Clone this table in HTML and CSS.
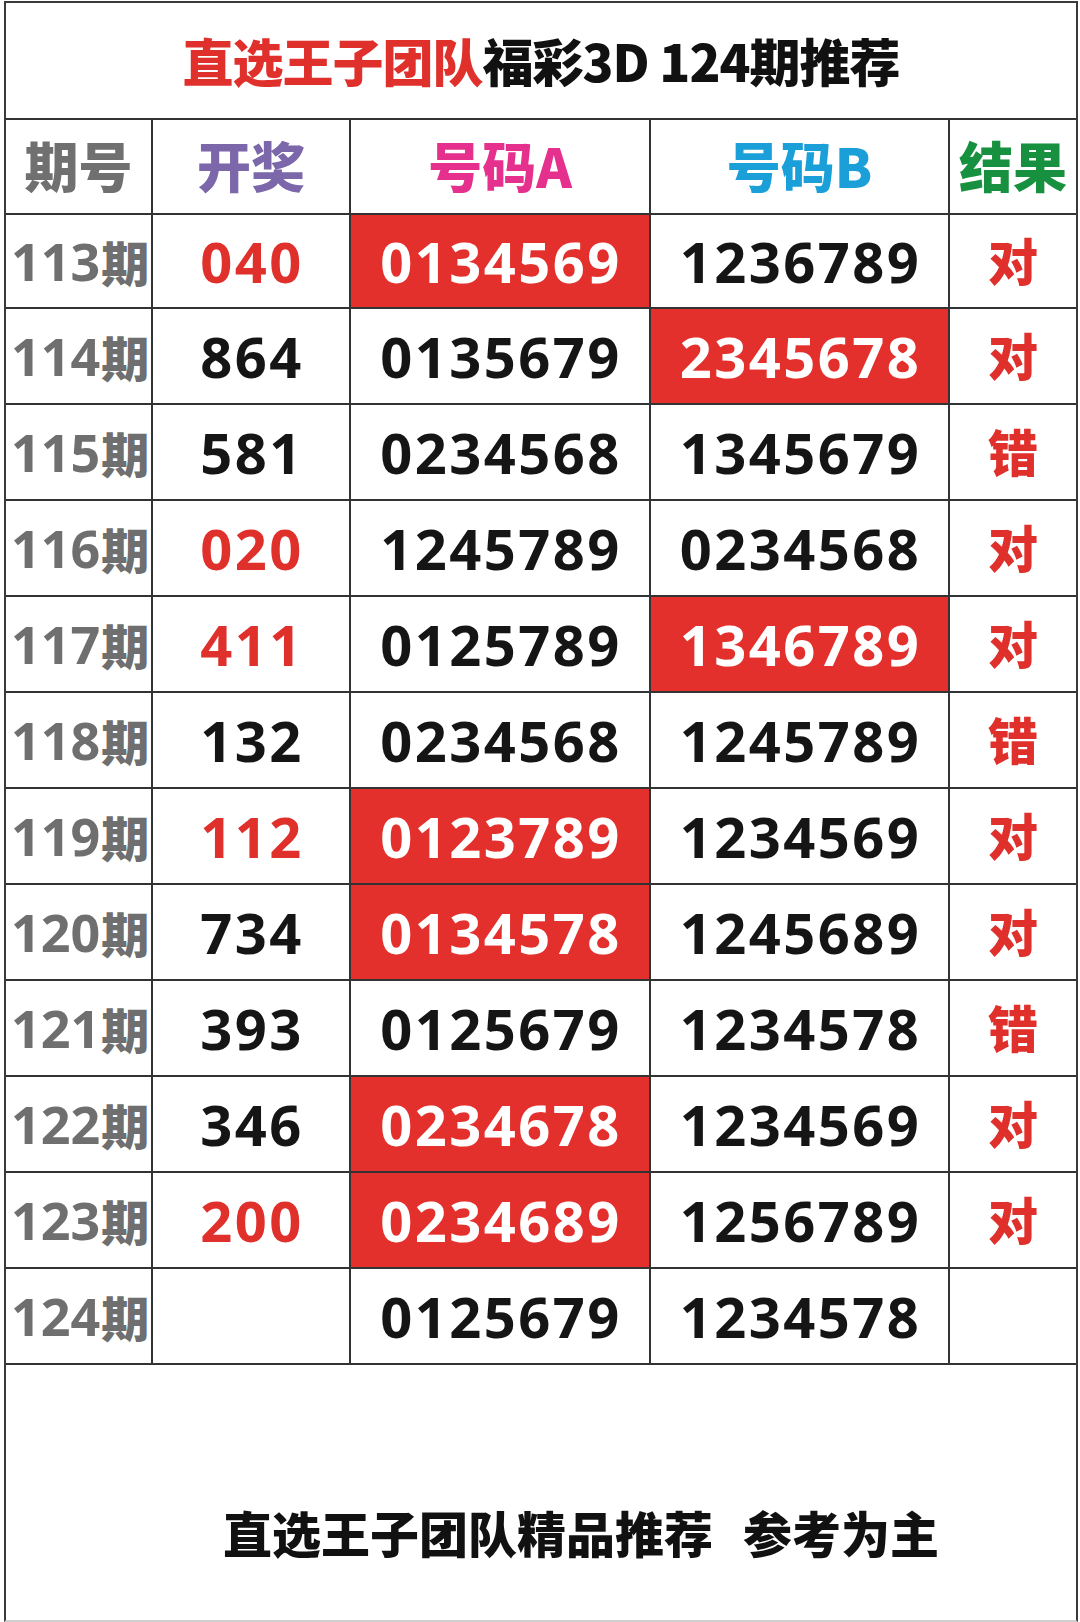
FILE: index.html
```html
<!DOCTYPE html>
<html lang="zh-CN">
<head>
<meta charset="utf-8">
<title>直选王子团队福彩3D 124期推荐</title>
<link rel="stylesheet" href="styles.css">
</head>
<body>
<div class="frame">
  <div class="title"><span class="red">直选王子团队</span><span>福彩3D 124期推荐</span></div>
  <div class="table">
    <div class="cell head c-gray">期号</div>
    <div class="cell head c-purple">开奖</div>
    <div class="cell head c-pink">号码A</div>
    <div class="cell head c-blue">号码B</div>
    <div class="cell head c-green last">结果</div>

    <div class="cell first period">113<span class="qi">期</span></div>
    <div class="cell num t-red">040</div>
    <div class="cell num hit">0134569</div>
    <div class="cell num">1236789</div>
    <div class="cell res last">对</div>

    <div class="cell period">114<span class="qi">期</span></div>
    <div class="cell num">864</div>
    <div class="cell num">0135679</div>
    <div class="cell num hit">2345678</div>
    <div class="cell res last">对</div>

    <div class="cell period">115<span class="qi">期</span></div>
    <div class="cell num">581</div>
    <div class="cell num">0234568</div>
    <div class="cell num">1345679</div>
    <div class="cell res last">错</div>

    <div class="cell period">116<span class="qi">期</span></div>
    <div class="cell num t-red">020</div>
    <div class="cell num">1245789</div>
    <div class="cell num">0234568</div>
    <div class="cell res last">对</div>

    <div class="cell period">117<span class="qi">期</span></div>
    <div class="cell num t-red">411</div>
    <div class="cell num">0125789</div>
    <div class="cell num hit">1346789</div>
    <div class="cell res last">对</div>

    <div class="cell period">118<span class="qi">期</span></div>
    <div class="cell num">132</div>
    <div class="cell num">0234568</div>
    <div class="cell num">1245789</div>
    <div class="cell res last">错</div>

    <div class="cell period">119<span class="qi">期</span></div>
    <div class="cell num t-red">112</div>
    <div class="cell num hit">0123789</div>
    <div class="cell num">1234569</div>
    <div class="cell res last">对</div>

    <div class="cell period">120<span class="qi">期</span></div>
    <div class="cell num">734</div>
    <div class="cell num hit">0134578</div>
    <div class="cell num">1245689</div>
    <div class="cell res last">对</div>

    <div class="cell period">121<span class="qi">期</span></div>
    <div class="cell num">393</div>
    <div class="cell num">0125679</div>
    <div class="cell num">1234578</div>
    <div class="cell res last">错</div>

    <div class="cell period">122<span class="qi">期</span></div>
    <div class="cell num">346</div>
    <div class="cell num hit">0234678</div>
    <div class="cell num">1234569</div>
    <div class="cell res last">对</div>

    <div class="cell period">123<span class="qi">期</span></div>
    <div class="cell num t-red">200</div>
    <div class="cell num hit">0234689</div>
    <div class="cell num">1256789</div>
    <div class="cell res last">对</div>

    <div class="cell period">124<span class="qi">期</span></div>
    <div class="cell num"></div>
    <div class="cell num">0125679</div>
    <div class="cell num">1234578</div>
    <div class="cell res last"></div>
  </div>
  <div class="footer"><span>直选王子团队精品推荐</span><span class="gap">参考为主</span></div>
</div>
</body>
</html>
```
FILE: styles.css
```css
html, body {
  margin: 0;
  padding: 0;
  background: #ffffff;
}
body {
  width: 1080px;
  height: 1622px;
  overflow: hidden;
  font-family: "Noto Sans CJK SC", "Noto Sans", sans-serif;
}
.frame {
  box-sizing: border-box;
  margin: 1px 0 0 4px;
  width: 1074px;
  height: 1621px;
  border: 2px solid #3a3a3a;
  border-bottom-color: #cfcfcf;
  display: flex;
  flex-direction: column;
}
.title {
  box-sizing: border-box;
  height: 117px;
  border-bottom: 2px solid #333333;
  display: flex;
  align-items: center;
  justify-content: center;
  font-size: 51px;
  font-weight: 900;
  color: #111111;
  letter-spacing: -1px;
  line-height: 1;
}
.red { color: #e0302c; }

.table {
  display: grid;
  grid-template-columns: 147px 198px 300px 299px 1fr;
  grid-template-rows: 95px 94px repeat(11, 96px);
}
.cell {
  box-sizing: border-box;
  border-right: 2px solid #333333;
  border-bottom: 2px solid #333333;
  display: flex;
  align-items: center;
  justify-content: center;
  line-height: 1;
  color: #151515;
}
.cell.last { border-right: none; }
.head {
  font-size: 54px;
  font-weight: 900;
  padding-bottom: 4px;
}
.c-gray { color: #707070; }
.c-purple { color: #7b67aa; }
.c-pink { color: #e5318d; }
.c-blue { color: #1b9fd8; }
.c-green { color: #17913f; }

.num {
  font-family: "Open Sans", "Noto Sans", sans-serif;
  font-weight: 700;
  font-size: 56px;
  letter-spacing: 2.5px;
  padding-left: 2px;
}
.t-red { color: #e0302c; }
.hit {
  background: #e3302d;
  color: #ffffff;
}
.period {
  font-family: "Open Sans", "Noto Sans", sans-serif;
  font-weight: 700;
  font-size: 52px;
  color: #6f6f6f;
  justify-content: flex-start;
  padding-left: 5px;
}
.qi {
  font-family: "Noto Sans CJK SC", sans-serif;
  font-weight: 900;
  font-size: 48px;
  margin-left: 1px;
}
.res {
  font-size: 50px;
  font-weight: 900;
  color: #e0302c;
  padding-bottom: 4px;
}
.footer {
  flex: 1;
  display: flex;
  justify-content: center;
  align-items: flex-end;
  padding-left: 80px;
  padding-bottom: 64px;
  font-size: 49px;
  font-weight: 900;
  color: #111111;
  line-height: 1;
}
.gap { margin-left: 30px; }
```
